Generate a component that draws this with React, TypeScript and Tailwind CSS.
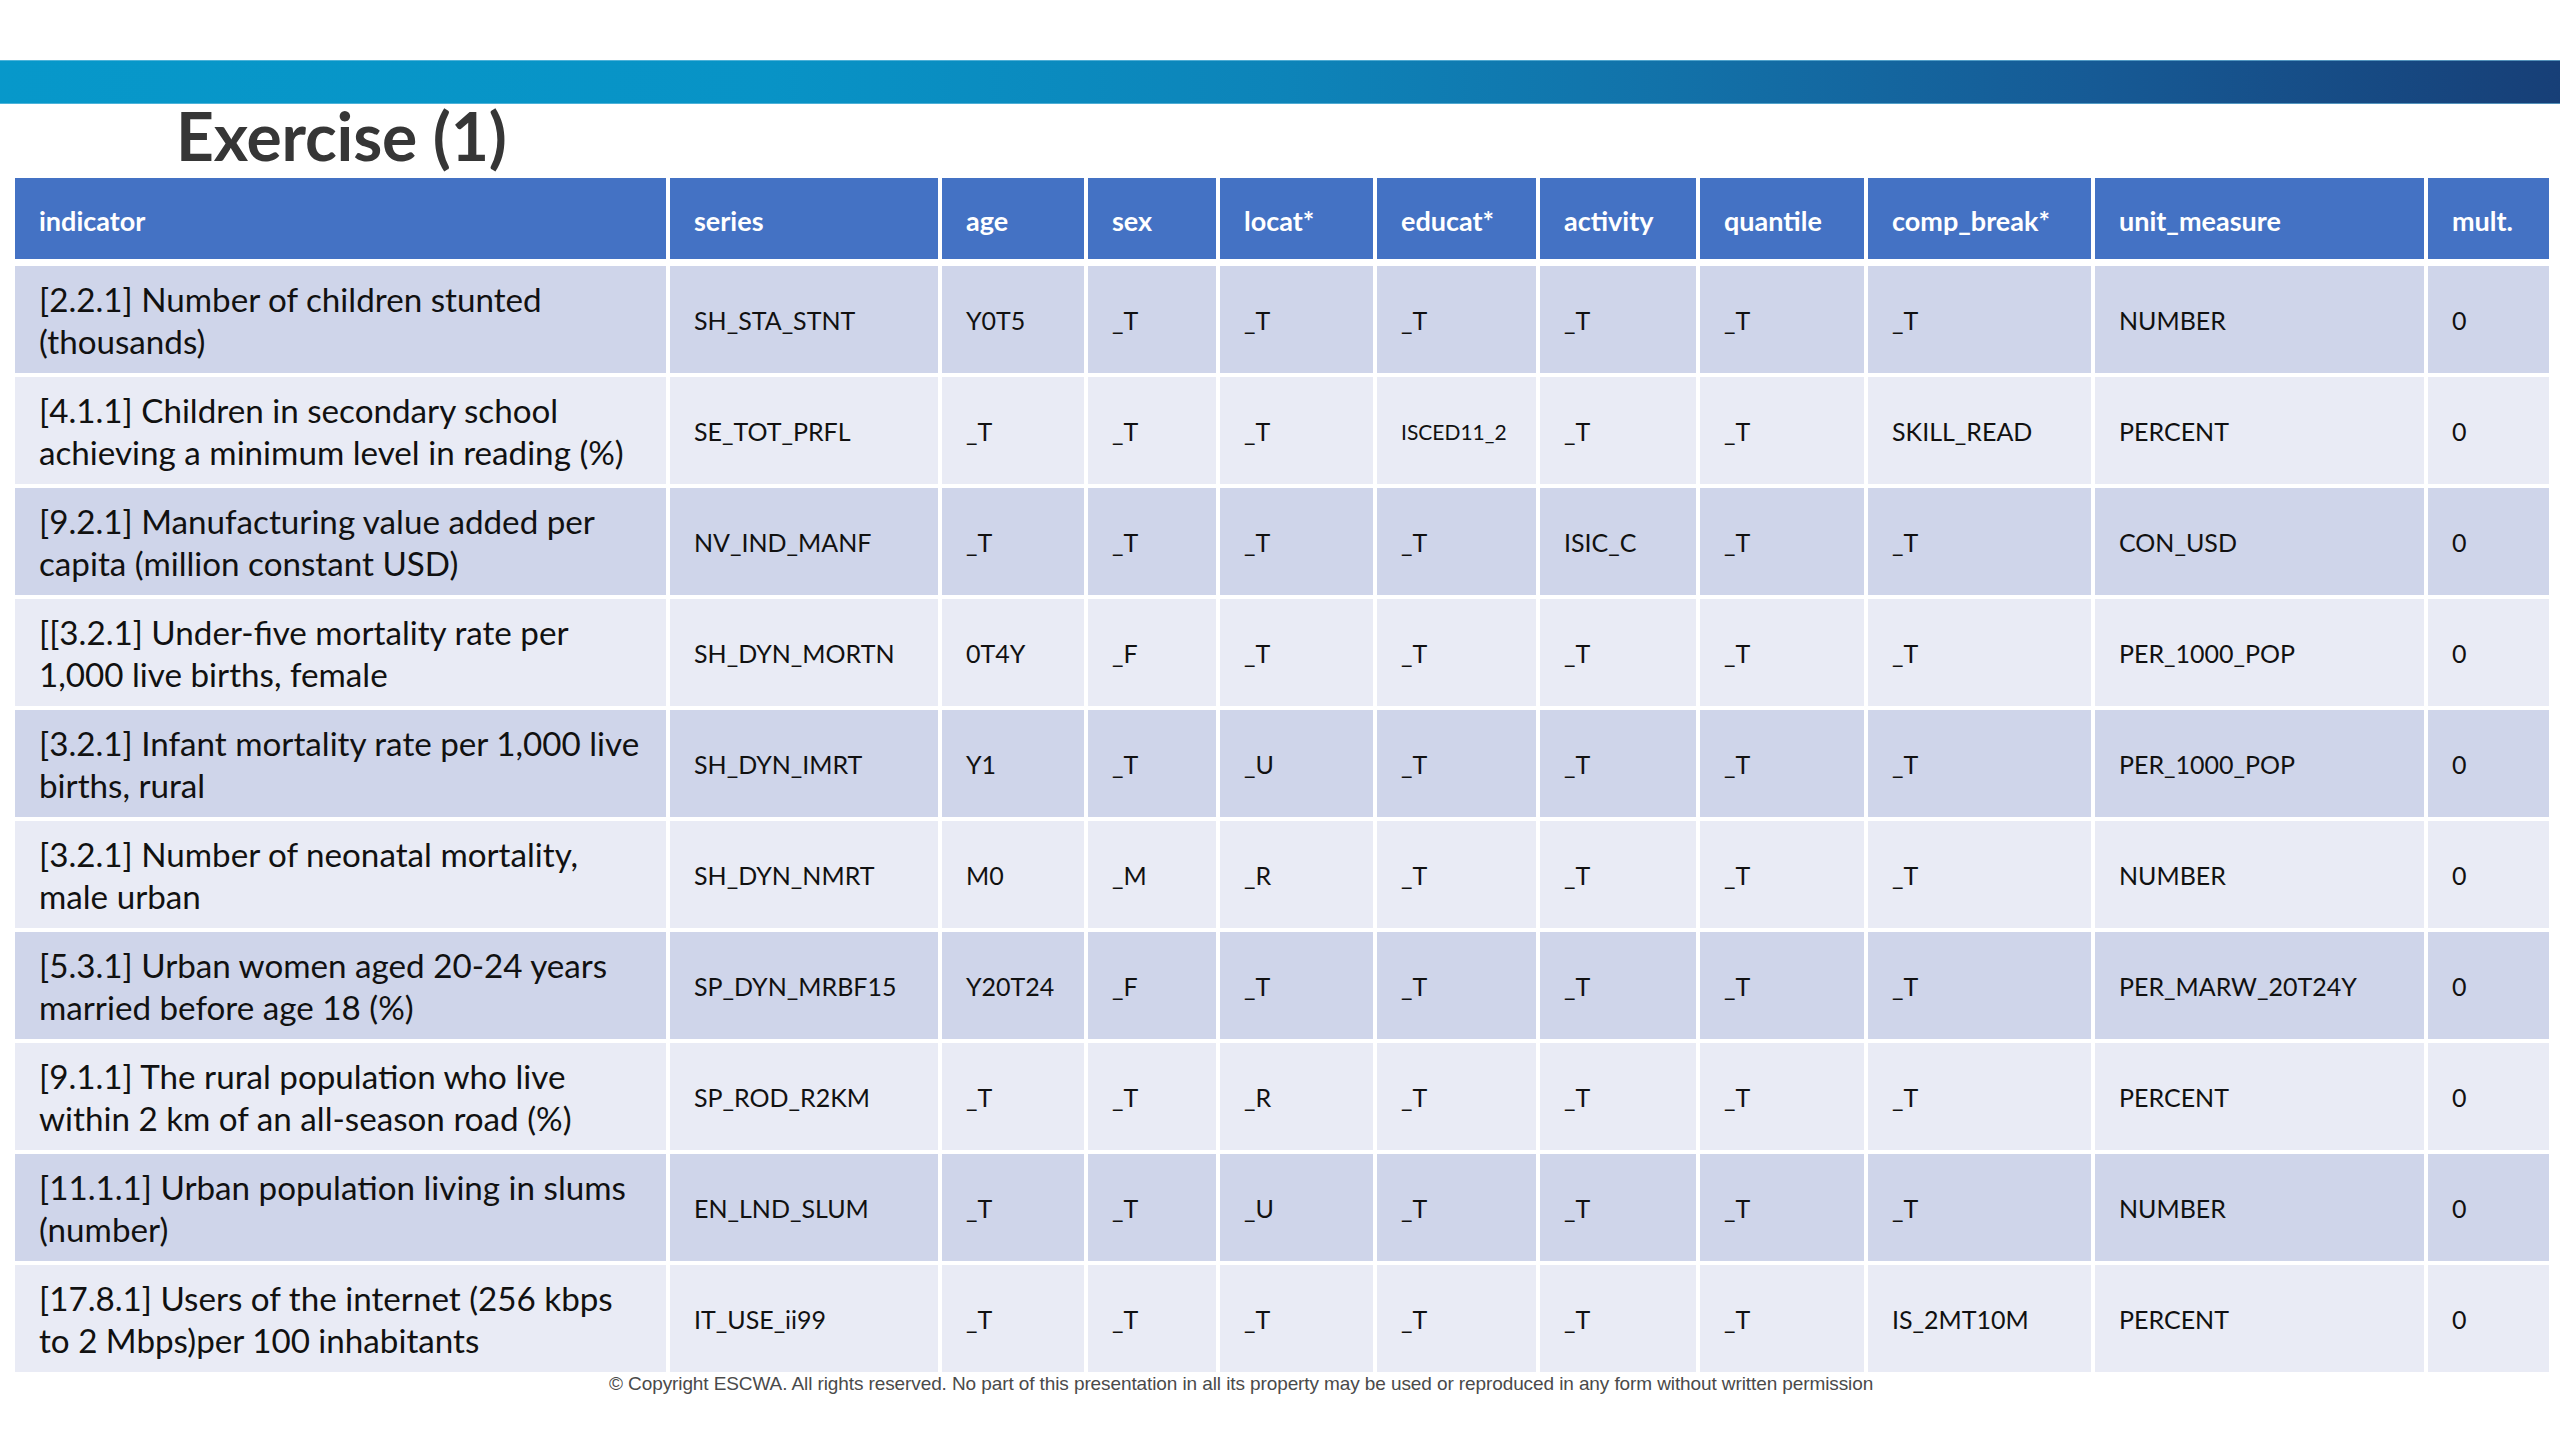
import React from "react";

const COLS =
  "grid grid-cols-[651px_268px_142px_128px_153px_159px_156px_164px_223px_329px_121px] gap-x-[4px]";

const headers = [
  "indicator",
  "series",
  "age",
  "sex",
  "locat*",
  "educat*",
  "activity",
  "quantile",
  "comp_break*",
  "unit_measure",
  "mult.",
];

const rows: { ind: [string, string]; vals: string[] }[] = [
  { ind: ["[2.2.1] Number of children stunted", "(thousands)"], vals: ["SH_STA_STNT", "Y0T5", "_T", "_T", "_T", "_T", "_T", "_T", "NUMBER", "0"] },
  { ind: ["[4.1.1] Children in secondary school", "achieving a minimum level in reading (%)"], vals: ["SE_TOT_PRFL", "_T", "_T", "_T", "ISCED11_2", "_T", "_T", "SKILL_READ", "PERCENT", "0"] },
  { ind: ["[9.2.1] Manufacturing value added per", "capita (million constant USD)"], vals: ["NV_IND_MANF", "_T", "_T", "_T", "_T", "ISIC_C", "_T", "_T", "CON_USD", "0"] },
  { ind: ["[[3.2.1] Under-five mortality rate per", "1,000 live births, female"], vals: ["SH_DYN_MORTN", "0T4Y", "_F", "_T", "_T", "_T", "_T", "_T", "PER_1000_POP", "0"] },
  { ind: ["[3.2.1] Infant mortality rate per 1,000 live", "births, rural"], vals: ["SH_DYN_IMRT", "Y1", "_T", "_U", "_T", "_T", "_T", "_T", "PER_1000_POP", "0"] },
  { ind: ["[3.2.1] Number of neonatal mortality,", "male urban"], vals: ["SH_DYN_NMRT", "M0", "_M", "_R", "_T", "_T", "_T", "_T", "NUMBER", "0"] },
  { ind: ["[5.3.1] Urban women aged 20-24 years", "married before age 18 (%)"], vals: ["SP_DYN_MRBF15", "Y20T24", "_F", "_T", "_T", "_T", "_T", "_T", "PER_MARW_20T24Y", "0"] },
  { ind: ["[9.1.1] The rural population who live", "within 2 km of an all-season road (%)"], vals: ["SP_ROD_R2KM", "_T", "_T", "_R", "_T", "_T", "_T", "_T", "PERCENT", "0"] },
  { ind: ["[11.1.1] Urban population living in slums", "(number)"], vals: ["EN_LND_SLUM", "_T", "_T", "_U", "_T", "_T", "_T", "_T", "NUMBER", "0"] },
  { ind: ["[17.8.1] Users of the internet (256 kbps", "to 2 Mbps)per 100 inhabitants"], vals: ["IT_USE_ii99", "_T", "_T", "_T", "_T", "_T", "_T", "IS_2MT10M", "PERCENT", "0"] },
];

export default function App() {
  return (
    <div className="w-[2560px] h-[1440px] bg-white overflow-hidden font-['Lato',_'Noto_Sans',_sans-serif]">
      <div className="h-[60px]" />
      <div className="h-[44px] bg-[linear-gradient(to_right,#0798ca_0%,#0893c6_30%,#0d84b9_50%,#1272a9_65%,#165a95_82%,#173f77_100%)] border-y border-[#7cc6e4]/60" />
      <div className="h-[75px] pl-[176px]">
        <h1 className="text-[66px] leading-[66px] font-bold text-[#363636] tracking-[-0.2px] -mt-[1px]">Exercise (1)</h1>
      </div>
      <div className="ml-[15px]">
        <div className={`${COLS} h-[81px]`}>
          {headers.map((h) => (
            <div key={h} className="bg-[#4472c4] flex items-center pl-[24px] pt-[5px] text-white font-bold text-[27px]">
              {h}
            </div>
          ))}
        </div>
        <div className="mt-[7px] flex flex-col gap-[4px]">
          {rows.map((r, i) => {
            const bg = i % 2 === 0 ? "bg-[#cfd5ea]" : "bg-[#e9ebf5]";
            return (
              <div key={i} className={`${COLS} h-[107px]`}>
                <div className={`${bg} flex flex-col justify-center pl-[24px] text-[33.2px] leading-[42px] text-[#111111]`}>
                  <span className="whitespace-nowrap">{r.ind[0]}</span>
                  <span className="whitespace-nowrap">{r.ind[1]}</span>
                </div>
                {r.vals.map((v, j) => (
                  <div
                    key={j}
                    className={`${bg} flex items-center pl-[24px] pt-[3px] text-[#111111] whitespace-nowrap ${
                      v === "ISCED11_2" ? "text-[21px]" : "text-[25px]"
                    }`}
                  >
                    {v}
                  </div>
                ))}
              </div>
            );
          })}
        </div>
      </div>
      <div className="pl-[609px] pt-[2px] text-[19px] leading-[20px] text-[#4a4a4a] font-['Liberation_Sans',_sans-serif] tracking-[-0.1px] whitespace-nowrap">
        © Copyright ESCWA. All rights reserved. No part of this presentation in all its property may be used or reproduced in any form without written permission
      </div>
    </div>
  );
}
